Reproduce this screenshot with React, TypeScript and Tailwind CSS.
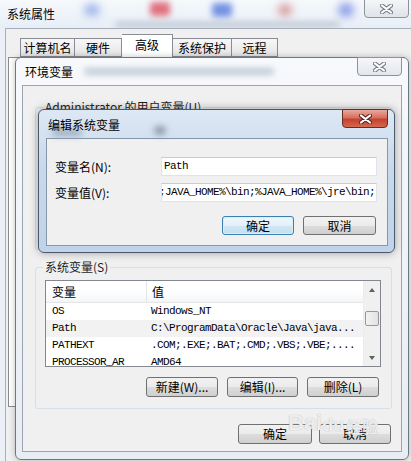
import React from "react";

const CJK = "font-['Noto_Sans_CJK_SC','Microsoft_YaHei',sans-serif]";
const MONO = "font-['Liberation_Mono','Noto_Sans_CJK_SC',monospace] tracking-[-0.6px]";

const BTN =
  "flex items-center justify-center rounded-[3px] border border-[#707070] bg-[linear-gradient(#f2f2f2,#ebebeb_50%,#dddddd_51%,#cfcfcf)] text-[12px] leading-none";
const BTN_DEFAULT =
  "flex items-center justify-center rounded-[3px] border border-[#3c7fb1] bg-[linear-gradient(#eef6fb,#e4f0f8_50%,#d2e7f5_51%,#c4dff1)] shadow-[inset_0_0_0_1px_#d8eefb] text-[12px] leading-none";

function CloseX({ dark }: { dark?: boolean }) {
  return (
    <svg width="13" height="10" viewBox="0 0 13 10">
      <path d="M2 1.5 L11 8.5 M11 1.5 L2 8.5" stroke={dark ? "#5a2a24" : "#7b7f86"} strokeWidth="4.2" strokeLinecap="round" />
      <path d="M2 1.5 L11 8.5 M11 1.5 L2 8.5" stroke="#fff" strokeWidth="2.2" strokeLinecap="round" />
    </svg>
  );
}

function GroupBox({ label, className, children }: { label: string; className: string; children?: React.ReactNode }) {
  return (
    <div className={`relative rounded-[3px] border border-[#d5dfe5] ${className}`}>
      <span className="absolute -top-[10px] left-[7px] bg-[#f0f0f0] px-[2px] text-[12px] leading-[18px] text-[#1e1e1e]">
        {label}
      </span>
      {children}
    </div>
  );
}

const rows = [
  ["OS", "Windows_NT"],
  ["Path", "C:\\ProgramData\\Oracle\\Java\\java..."],
  ["PATHEXT", ".COM;.EXE;.BAT;.CMD;.VBS;.VBE;...."],
  ["PROCESSOR_AR", "AMD64"],
];

function SysVarList() {
  return (
    <div className="flex h-[87px] border border-[#828790] bg-white">
      <div className="flex min-w-0 flex-1 flex-col overflow-hidden">
        {/* header */}
        <div className="flex h-[22px] shrink-0 border-b border-[#e5e5e5] bg-[linear-gradient(#ffffff,#ffffff_45%,#f3f5f8)] text-[12px] leading-[22px]">
          <div className="w-[101px] shrink-0 border-r border-[#e5e5e5] pl-[6px]">变量</div>
          <div className="pl-[5px]">值</div>
        </div>
        {rows.map(([k, v], i) => (
          <div
            key={k}
            className={`flex h-[17px] shrink-0 items-center text-[11px] ${MONO} ${i === 1 ? "bg-[#f2f2f2]" : ""}`}
          >
            <div className="w-[101px] shrink-0 pl-[6px]">{k}</div>
            <div className="whitespace-nowrap pl-[4px]">{v}</div>
          </div>
        ))}
      </div>
      {/* scrollbar */}
      <div className="flex w-[17px] shrink-0 flex-col border-l border-[#ececec] bg-[#f0f0f0]">
        <div className="flex h-[17px] items-center justify-center">
          <div className="h-0 w-0 border-x-[3.5px] border-b-[4px] border-x-transparent border-b-[#606060]" />
        </div>
        <div className="flex-1">
          <div className="mx-[1px] mt-[13px] h-[15px] rounded-[2px] border border-[#979797] bg-[linear-gradient(90deg,#f3f3f3,#e2e2e2)]" />
        </div>
        <div className="flex h-[17px] items-center justify-center">
          <div className="h-0 w-0 border-x-[3.5px] border-t-[4px] border-x-transparent border-t-[#606060]" />
        </div>
      </div>
    </div>
  );
}

function OuterWindow() {
  return (
    <div className="absolute inset-0 flex flex-col bg-[#eaf0f6]">
      <div className="relative h-[28px] shrink-0 overflow-hidden bg-[linear-gradient(#f6f9fc,#e7eef7)]">
        <div className="absolute left-[84px] top-[4px] h-[12px] w-[16px] rounded-full bg-[#9fb4ec] blur-[4px]" />
        <div className="absolute left-[150px] top-[2px] h-[14px] w-[20px] rounded-[3px] bg-[#e0707e] blur-[3px]" />
        <div className="absolute left-[212px] top-[3px] h-[14px] w-[20px] rounded-[3px] bg-[#7592e2] blur-[3px]" />
        <div className="absolute left-[278px] top-[4px] h-[12px] w-[14px] rounded-full bg-[#d79a9a] blur-[4px]" />
        <div className="absolute left-[338px] top-[3px] h-[14px] w-[16px] rounded-full bg-[#8d9fe6] blur-[4px]" />
        <div className="absolute left-[115px] top-[22px] h-[5px] w-[225px] rounded-full bg-[#9aa3b0] opacity-60 blur-[3px]" />
        <div className="relative pl-[7px] pt-[5px] text-[12px] leading-[18px] text-black">系统属性</div>
        <div className="absolute right-[2px] top-[-1px] flex h-[19px] w-[45px] items-center justify-center rounded-b-[4px] border border-[#8d939b] bg-[linear-gradient(#f4f6f8,#dfe4ea)]">
          <CloseX />
        </div>
      </div>
      <div className="flex flex-1 flex-col border-l border-t border-[#a7b0ba] bg-[#f0f0f0] ml-[5px] pt-[4px]">
        <div className="flex h-[24px] shrink-0 items-end pl-[14px] text-[12px]">
          <div className="flex h-[19px] w-[55px] items-center justify-center border border-[#898c95] bg-[linear-gradient(#f7f7f7,#e5e5e5)]">计算机名</div>
          <div className="flex h-[19px] w-[47px] items-center justify-center border border-l-0 border-[#898c95] bg-[linear-gradient(#f7f7f7,#e5e5e5)]">硬件</div>
          <div className="flex h-[23px] w-[51px] items-center justify-center border border-b-0 border-l-0 border-[#898c95] bg-white pb-[3px]">高级</div>
          <div className="flex h-[19px] w-[59px] items-center justify-center border border-l-0 border-[#898c95] bg-[linear-gradient(#f7f7f7,#e5e5e5)]">系统保护</div>
          <div className="flex h-[19px] w-[46px] items-center justify-center border border-l-0 border-[#898c95] bg-[linear-gradient(#f7f7f7,#e5e5e5)]">远程</div>
        </div>
        <div className="ml-[2px] mr-[8px] h-[350px] border border-[#898c95] bg-white" />
      </div>
    </div>
  );
}

function EnvWindow() {
  return (
    <div className="absolute left-[15px] top-[57px] flex h-[403px] w-[394px] flex-col rounded-[6px] border border-[#6d7782] bg-[linear-gradient(#f7f9fc,#e8edf3)] px-[6px] pb-[7px] shadow-[0_0_6px_rgba(0,0,0,0.25)]">
      <div className="relative h-[27px] shrink-0">
        <div className="absolute left-[62px] top-[10px] h-[7px] w-[190px] rounded-full bg-[#a9b6c6] opacity-70 blur-[3px]" />
        <div className="relative pl-[3px] pt-[5px] text-[12px] leading-[18px]">环境变量</div>
        <div className="absolute right-[0px] top-[-1px] flex h-[19px] w-[45px] items-center justify-center rounded-b-[4px] border border-[#8d939b] bg-[linear-gradient(#f6f7f9,#e3e7ec)]">
          <CloseX />
        </div>
      </div>
      <div className="flex flex-1 flex-col border border-[#9aa5b1] bg-[#f0f0f0]">
        <GroupBox label="Administrator 的用户变量(U)" className="ml-[12px] mr-[9px] mt-[21px] h-[143px]" />
        <GroupBox label="系统变量(S)" className="ml-[12px] mr-[9px] mt-[17px] pb-[11px] pl-[9px] pr-[10px] pt-[12px]">
          <SysVarList />
          <div className="mt-[10px] flex justify-end gap-[9px] pr-[2px]">
            <div className={`${BTN} h-[20px] w-[72px]`}>新建(W)...</div>
            <div className={`${BTN} h-[20px] w-[71px]`}>编辑(I)...</div>
            <div className={`${BTN} h-[20px] w-[72px]`}>删除(L)</div>
          </div>
        </GroupBox>
        <div className="mt-[15px] flex justify-end gap-[7px] pr-[10px]">
          <div className={`${BTN} h-[20px] w-[74px]`}>确定</div>
          <div className={`${BTN} h-[20px] w-[72px]`}>取消</div>
        </div>
      </div>
    </div>
  );
}

function EditDialog() {
  return (
    <div className="absolute left-[38px] top-[109px] flex h-[144px] w-[357px] flex-col rounded-[6px] border border-[#4a5a6c] bg-[linear-gradient(#dde8f4,#c9d9ec_40%,#c0d3e8)] px-[7px] pb-[6px] pr-[6px] shadow-[0_0_8px_rgba(0,0,0,0.35)]">
      <div className="relative h-[28px] shrink-0">
        <div className="absolute left-[6px] top-[19px] h-[7px] w-[30px] rounded-full bg-[#8797aa] opacity-70 blur-[3px]" />
        <div className="absolute left-[108px] top-[16px] h-[9px] w-[12px] rounded-full bg-[#5d6b7c] opacity-60 blur-[3px]" />
        <div className="relative pl-[2px] pt-[6px] text-[12px] leading-[18px]">编辑系统变量</div>
        <div className="absolute right-[0px] top-[-1px] flex h-[19px] w-[46px] items-center justify-center rounded-b-[4px] border border-[#6b2b22] bg-[linear-gradient(#e9a99b,#d7705f_45%,#c7412f_55%,#d26a4f)]">
          <CloseX dark />
        </div>
      </div>
      <div className="flex flex-1 flex-col border border-[#8797aa] bg-[#f0f0f0] pl-[8px] pr-[10px] pt-[18px]">
        <div className="flex h-[19px] items-center">
          <div className="w-[106px] shrink-0 text-[12px]">变量名(N):</div>
          <div className={`flex h-full flex-1 items-center overflow-hidden border border-[#dfe4ea] border-t-[#c7ccd2] bg-white pl-[2px] text-[11px] ${MONO}`}>
            Path
          </div>
        </div>
        <div className="mt-[7px] flex h-[19px] items-center">
          <div className="w-[106px] shrink-0 text-[12px]">变量值(V):</div>
          <div className={`flex h-full flex-1 items-center overflow-hidden whitespace-nowrap border border-[#dfe4ea] border-t-[#c7ccd2] bg-white text-[11px] ${MONO}`}>
            <span className="-ml-[3px]">;JAVA_HOME%\bin;%JAVA_HOME%\jre\bin;</span>
          </div>
        </div>
        <div className="mt-[14px] flex justify-end gap-[9px] pr-[1px]">
          <div className={`${BTN_DEFAULT} h-[19px] w-[72px]`}>确定</div>
          <div className={`${BTN} h-[19px] w-[73px]`}>取消</div>
        </div>
      </div>
    </div>
  );
}

export default function App() {
  return (
    <div className={`relative h-[461px] w-[411px] overflow-hidden bg-white text-black ${CJK}`}>
      <OuterWindow />
      <EnvWindow />
      <EditDialog />
      {/* Baidu watermark */}
      <div className="pointer-events-none absolute left-[288px] top-[412px] flex items-end text-[22px] font-bold leading-none text-white/80 [text-shadow:0_0_1px_#9aa0a8] font-['Liberation_Sans',sans-serif]">
        <span>Bai</span>
        <span className="text-[18px]">du</span>
        <span className={`ml-[2px] text-[16px] ${CJK}`}>经验</span>
      </div>
    </div>
  );
}
